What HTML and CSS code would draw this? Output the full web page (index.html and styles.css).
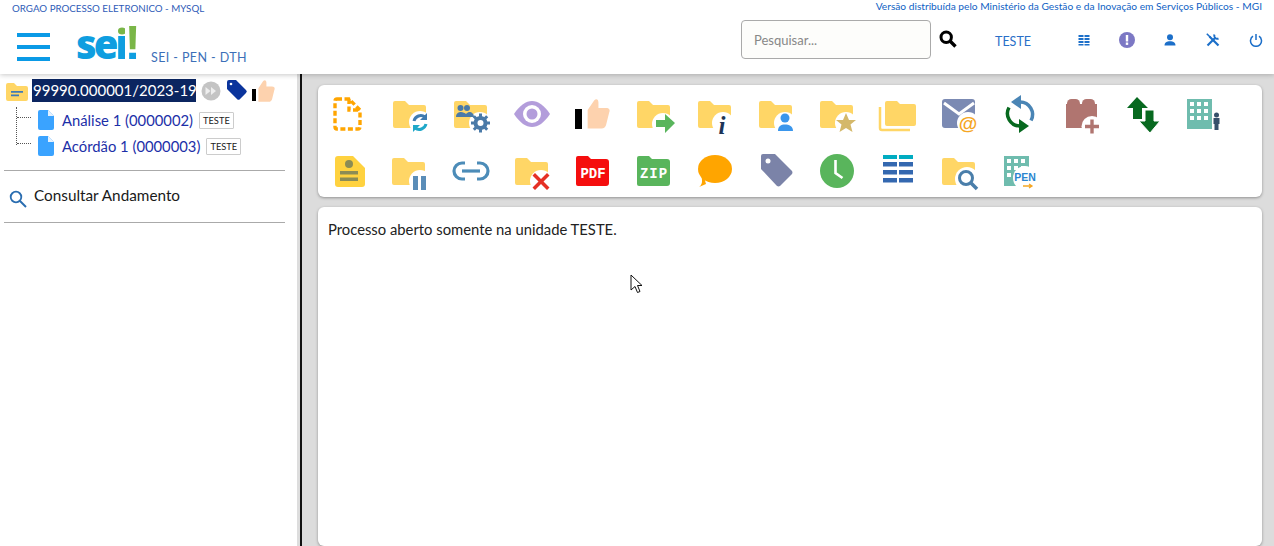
FILE: index.html
```html
<!DOCTYPE html>
<html lang="pt-BR">
<head>
<meta charset="utf-8">
<title>SEI</title>
<link rel="stylesheet" href="styles.css">
</head>
<body>
<svg class="defs" width="0" height="0">
  <defs>
    <path id="folder" d="M3 9a2 2 0 0 1 2-2h10l4 4h15a2 2 0 0 1 2 2v19a2 2 0 0 1-2 2H5a2 2 0 0 1-2-2z" fill="#ffd666"/>
    <g id="bldg">
      <rect x="0" y="0" width="25" height="30" fill="#6fbcae"/>
      <g fill="#fff">
        <rect x="3" y="3" width="4" height="4"/><rect x="10" y="3" width="4" height="4"/><rect x="17" y="3" width="4" height="4"/>
        <rect x="3" y="10" width="4" height="4"/><rect x="10" y="10" width="4" height="4"/><rect x="17" y="10" width="4" height="4"/>
        <rect x="3" y="17" width="4" height="4"/><rect x="10" y="17" width="4" height="4"/><rect x="17" y="17" width="4" height="4"/>
      </g>
    </g>
    <path id="thumb" d="M8 14l6-9c2-2 4-1 4 2v5h7c3 0 4 2 3 4l-3 12c-1 2-2 3-4 3H8z" fill="#fdd2ae"/>
  </defs>
</svg>
<div class="page">
  <header class="header">
    <div class="topline">
      <a class="org">ORGAO PROCESSO ELETRONICO - MYSQL</a>
      <a class="version">Versão distribuída pelo Ministério da Gestão e da Inovação em Serviços Públicos - MGI</a>
    </div>
    <div class="bar">
      <div class="burger"><span></span><span></span><span></span></div>
      <div class="logo">se<span class="logo-i">i</span><span class="logo-bang">!</span></div>
      <div class="system">SEI - PEN - DTH</div>
      <div class="spacer"></div>
      <div class="search">Pesquisar...</div>
      <svg class="sicon" width="18" height="18" viewBox="0 0 18 18"><circle cx="7.2" cy="7.2" r="5.2" fill="none" stroke="#000" stroke-width="3"/><path d="M11 11l5.500 5.500" stroke="#000" stroke-width="3.400"/></svg>
      <div class="unit">TESTE</div>
      <div class="tools">
        <svg width="14" height="14" viewBox="0 0 14 14" fill="#1c6fc9"><path d="M1.500 2h5v2h-5zM7.500 2h5v2h-5zM1.500 5h5v2h-5zM7.500 5h5v2h-5zM1.500 8h5v2h-5zM7.500 8h5v2h-5zM1.500 11h5v1.500h-5zM7.500 11h5v1.500h-5z"/></svg>
        <svg width="18" height="18" viewBox="0 0 18 18"><circle cx="9" cy="9" r="8" fill="#7c78c4"/><rect x="7.800" y="4" width="2.400" height="6.500" fill="#fff"/><rect x="7.800" y="11.500" width="2.400" height="2.400" fill="#fff"/></svg>
        <svg width="14" height="14" viewBox="0 0 14 14" fill="#1c6fc9"><circle cx="7" cy="4.200" r="3"/><path d="M1.500 12.500c0-3 2.500-4.300 5.500-4.300s5.500 1.300 5.500 4.300z"/></svg>
        <svg width="14" height="14" viewBox="0 0 14 14" fill="none" stroke="#1c6fc9"><path d="M3.500 3.500l9 9" stroke-width="2.200"/><path d="M9.500 4.500L1.500 12.500" stroke-width="2.200"/><path d="M0.800 0.800l3.500 3.500" stroke-width="1.600"/><path d="M8.500 1.500a3 3 0 0 0 4 4" stroke-width="2"/></svg>
        <svg width="14" height="14" viewBox="0 0 14 14" fill="none" stroke="#1c6fc9" stroke-width="1.500"><path d="M4 3.200a5.500 5.500 0 1 0 6 0M7 1v6"/></svg>
      </div>
    </div>
  </header>
  <div class="main">
    <aside class="tree">
      <div class="proc">
        <svg width="22" height="18" viewBox="0 0 22 18" class="pfolder"><path d="M0 2a2 2 0 0 1 2-2h6l3 3h9a2 2 0 0 1 2 2v11a2 2 0 0 1-2 2H2a2 2 0 0 1-2-2z" fill="#ffd666"/><path d="M5 8h12v1.800H5zM5 11.500h8v1.800H5z" fill="#3f7bb8"/></svg>
        <span class="procnum">99990.000001/2023-19</span>
        <svg class="pi1" width="20" height="20" viewBox="0 0 20 20"><circle cx="10" cy="10" r="9.500" fill="#c4c4c4"/><path d="M4.500 6l5 4-5 4zM10 6l5 4-5 4z" fill="#eee"/></svg>
        <svg class="pi2" width="22" height="22" viewBox="0 0 22 22"><path d="M1 3a2 2 0 0 1 2-2h7l10 10a2 2 0 0 1 0 3l-6 6a2 2 0 0 1-3 0L1 10z" fill="#0b349c"/><circle cx="5" cy="5" r="1.300" fill="#fff"/></svg>
        <svg class="pi3" width="24" height="22" viewBox="0 0 24 22"><rect x="0" y="9" width="4" height="12" fill="#000"/><g transform="translate(0 -3) scale(.8)"><use href="#thumb"/></g></svg>
      </div>
      <div class="docs">
        <div class="doc">
          <svg width="16" height="20" viewBox="0 0 16 20"><path d="M2 0h8l6 6v12a2 2 0 0 1-2 2H2a2 2 0 0 1-2-2V2a2 2 0 0 1 2-2z" fill="#3aa3ff"/><path d="M10 0l6 6h-6z" fill="#e4f1ff"/></svg>
          <a class="doclink">Análise 1 (0000002)</a><span class="tag">TESTE</span>
        </div>
        <div class="doc">
          <svg width="16" height="20" viewBox="0 0 16 20"><path d="M2 0h8l6 6v12a2 2 0 0 1-2 2H2a2 2 0 0 1-2-2V2a2 2 0 0 1 2-2z" fill="#3aa3ff"/><path d="M10 0l6 6h-6z" fill="#e4f1ff"/></svg>
          <a class="doclink">Acórdão 1 (0000003)</a><span class="tag">TESTE</span>
        </div>
      </div>
      <hr class="rule">
      <div class="consult">
        <svg width="18" height="18" viewBox="0 0 18 18"><circle cx="7" cy="7" r="5.300" fill="none" stroke="#2a6db0" stroke-width="1.800"/><path d="M11 11l6 6" stroke="#2a6db0" stroke-width="2"/></svg>
        <span>Consultar Andamento</span>
      </div>
      <hr class="rule rule2">
    </aside>
    <div class="split"></div>
    <section class="content">
      <div class="card toolbar">
        <svg viewBox="0 0 40 40"><path d="M8 5h12l11 11v17a2 2 0 0 1-2 2H8a2 2 0 0 1-2-2V7a2 2 0 0 1 2-2zM20 5v11h11" fill="none" stroke="#ffa500" stroke-width="3.400" stroke-dasharray="5 2.500"/></svg>
        <svg viewBox="0 0 40 40"><use href="#folder"/><circle cx="30" cy="28" r="11" fill="#fff"/><path d="M24 27a7 7 0 0 1 11-4" fill="none" stroke="#3f7bb0" stroke-width="3"/><path d="M37 19v7h-7z" fill="#3f7bb0"/><path d="M36 30a7 7 0 0 1-11 4" fill="none" stroke="#1fa8c9" stroke-width="3"/><path d="M23 38v-7h7z" fill="#1fa8c9"/></svg>
        <svg viewBox="0 0 40 40"><use href="#folder"/><circle cx="29" cy="29" r="11" fill="#fff"/><g fill="#4a7aa8"><circle cx="9.500" cy="14" r="3"/><circle cx="16" cy="14" r="3"/><path d="M5 23c0-4 3-5 5-5s4 1 5 2c1-1 2-2 3-2 3 0 5 2 5 5z"/><circle cx="29.500" cy="29" r="7"/><g stroke="#4a7aa8" stroke-width="3"><path d="M29.500 19.500v19M20 29h19M22.800 22.300l13.400 13.400M36.200 22.300l-13.400 13.400"/></g></g><circle cx="29.500" cy="29" r="3" fill="#fff"/></svg>
        <svg viewBox="0 0 40 40"><path d="M2 20C8 11 14 7 20 7s12 4 18 13c-6 9-12 13-18 13S8 29 2 20z" fill="#b39ddb"/><circle cx="20" cy="20" r="9" fill="#fff"/><circle cx="20" cy="20" r="5.500" fill="#b39ddb"/></svg>
        <svg viewBox="0 0 40 40"><rect x="2" y="15" width="7" height="20" fill="#000"/><g transform="translate(6 1)"><use href="#thumb" transform="scale(1.080)"/></g></svg>
        <svg viewBox="0 0 40 40"><use href="#folder"/><circle cx="29" cy="30" r="11" fill="#fff"/><path d="M22 26h9v-6l10 9-10 10v-6h-9z" fill="#59b55c"/></svg>
        <svg viewBox="0 0 40 40"><use href="#folder"/><circle cx="28" cy="29" r="11" fill="#fff"/><text class="iconi" x="23.500" y="40">i</text></svg>
        <svg viewBox="0 0 40 40"><use href="#folder"/><circle cx="29" cy="29" r="11" fill="#fff"/><circle cx="29" cy="24" r="4.500" fill="#3a96ec"/><path d="M22 37c0-5 3-6.500 7-6.500s8 1.500 8 6.500z" fill="#3a96ec"/></svg>
        <svg viewBox="0 0 40 40"><use href="#folder"/><circle cx="29" cy="29" r="11" fill="#fff"/><path d="M29 19l3 7h7l-5.500 4.500 2 7.500-6.500-4-6.500 4 2-7.500L19 26h7z" fill="#d4b86a"/></svg>
        <svg viewBox="0 0 40 40"><path d="M2 13v21a2 2 0 0 0 2 2h28" fill="none" stroke="#ffd666" stroke-width="2.500"/><path d="M7 9a2 2 0 0 1 2-2h10l3 3h14a2 2 0 0 1 2 2v18a2 2 0 0 1-2 2H9a2 2 0 0 1-2-2z" fill="#ffd666"/></svg>
        <svg viewBox="0 0 40 40"><rect x="3" y="5" width="33" height="29" rx="3" fill="#7b8ab3"/><path d="M5 9l15 11 15-11" fill="none" stroke="#fff" stroke-width="3"/><circle cx="29" cy="29" r="11" fill="#fff"/><text class="iconat" x="29" y="36">@</text></svg>
        <svg viewBox="0 0 40 40"><path d="M20 8a12.500 12.500 0 0 1 11 18.500" fill="none" stroke="#4a85b5" stroke-width="3.500"/><path d="M21 1v14L11 8z" fill="#4a85b5"/><path d="M20 32a12.500 12.500 0 0 1-11-18.500" fill="none" stroke="#07691f" stroke-width="3.500"/><path d="M19 25v14l10-7z" fill="#07691f"/></svg>
        <svg viewBox="0 0 40 40"><rect x="6" y="5" width="13" height="9" rx="4.500" fill="#b07570"/><rect x="21" y="5" width="13" height="9" rx="4.500" fill="#b07570"/><rect x="5" y="10" width="31" height="24" fill="#b07570"/><circle cx="31" cy="32.500" r="10.500" fill="#fff"/><path d="M29.300 25.500h3.400v5.300H38v3.400h-5.300v5.300h-3.400v-5.300H24v-3.400h5.300z" fill="#b07570"/></svg>
        <svg viewBox="0 0 40 40"><path d="M5 14L15 3l11 11h-6v11h-9V14z" fill="#07691f"/><path d="M23 16h9v11h6L28 39 17 27h6z" fill="#07691f" stroke="#fff" stroke-width="1"/></svg>
        <svg viewBox="0 0 40 40"><use href="#bldg" x="4" y="5"/><circle cx="33.500" cy="21" r="2.500" fill="#37506b"/><path d="M30.500 24h6v6h-1v6h-4v-6h-1z" fill="#37506b"/></svg>

        <svg viewBox="0 0 40 40"><path d="M9 5h15l12 12v16a3 3 0 0 1-3 3H9a3 3 0 0 1-3-3V8a3 3 0 0 1 3-3z" fill="#ffd23f"/><circle cx="20" cy="13" r="4" fill="#8c8c55"/><path d="M11 20h18v3.500H11zM11 26.500h18V30H11z" fill="#8c8c55"/></svg>
        <svg viewBox="0 0 40 40"><use href="#folder" x="-1"/><circle cx="30" cy="30" r="11" fill="#fff"/><path d="M23 25h5v14h-5zM31 25h5v14h-5z" fill="#5a8db8"/></svg>
        <svg viewBox="0 0 40 40"><path d="M14 12H11a8 8 0 0 0 0 16h3M26 12h3a8 8 0 0 1 0 16h-3" fill="none" stroke="#4c8cb8" stroke-width="3.200"/><path d="M11 20h18" stroke="#4c8cb8" stroke-width="3.200"/></svg>
        <svg viewBox="0 0 40 40"><use href="#folder"/><circle cx="29" cy="30" r="11" fill="#fff"/><path d="M23 24l6 6 6-6 2.500 2.500-6 6 6 6L35 41l-6-6-6 6-2.500-2.500 6-6-6-6z" fill="#e53024" transform="translate(0 -2)"/></svg>
        <svg viewBox="0 0 40 40"><path d="M3 7a2 2 0 0 1 2-2h10l3 3h15a3 3 0 0 1 3 3v21a3 3 0 0 1-3 3H5a2 2 0 0 1-2-2z" fill="#f50e0e"/><text class="iconpdf" x="20" y="27">PDF</text></svg>
        <svg viewBox="0 0 40 40"><path d="M3 7a2 2 0 0 1 2-2h10l3 3h15a3 3 0 0 1 3 3v21a3 3 0 0 1-3 3H5a2 2 0 0 1-2-2z" fill="#59b55c"/><text class="iconzip" x="20" y="27">ZIP</text></svg>
        <svg viewBox="0 0 40 40"><ellipse cx="20" cy="18" rx="17" ry="14" fill="#ffa500"/><path d="M9 26l2 7-7 3c3-2 4-6 2-11z" fill="#ffa500"/></svg>
        <svg viewBox="0 0 40 40"><path d="M5 5a2 2 0 0 1 2-2h12l17 17a3 3 0 0 1 0 3L24 35a3 3 0 0 1-3 0L5 18z" fill="#7b83a8"/><circle cx="12" cy="10" r="2.500" fill="#fff"/></svg>
        <svg viewBox="0 0 40 40"><circle cx="20" cy="20" r="17" fill="#59b55c"/><path d="M18.500 9v13l7 5" fill="none" stroke="#fff" stroke-width="2.600"/></svg>
        <svg viewBox="0 0 40 40"><rect x="5" y="4" width="14" height="4" fill="#00acc1"/><rect x="21" y="4" width="14" height="4" fill="#00acc1"/><path d="M5 11h14v4.500H5zM21 11h14v4.500H21zM5 19h14v4.500H5zM21 19h14v4.500H21zM5 27h14v4.500H5zM21 27h14v4.500H21z" fill="#3468b0"/></svg>
        <svg viewBox="0 0 40 40"><use href="#folder"/><circle cx="28" cy="28" r="12" fill="#fff"/><circle cx="27" cy="27" r="6.500" fill="none" stroke="#4a7eaa" stroke-width="3"/><path d="M32 32l6 6" stroke="#4a7eaa" stroke-width="3.500"/></svg>
        <svg viewBox="0 0 40 40"><use href="#bldg" x="4" y="5"/><circle cx="25" cy="27" r="12" fill="#fff"/><text class="iconpen" x="25" y="30">PEN</text><path d="M23 35h8M29 33l3 2-3 2" fill="none" stroke="#f5a623" stroke-width="1.300"/></svg>
      </div>
      <div class="card body">
        <p>Processo aberto somente na unidade TESTE.</p>
      </div>
    </section>
  </div>
  <svg class="cursor" width="14" height="21" viewBox="0 0 14 21"><path d="M1 1v15l4-3.500 2.500 6 2.500-1-2.500-6H12z" fill="#fff" stroke="#111" stroke-width="1"/></svg>
</div>
</body>
</html>
```
FILE: styles.css
```css
* { box-sizing: border-box; }
html, body { margin: 0; padding: 0; }
body { font-family: Lato, "Open Sans", sans-serif; background: #fff; color: #222; }
.defs { position: absolute; }
.page { position: relative; width: 1274px; height: 546px; overflow: hidden; display: flex; flex-direction: column; }

.header { height: 74px; flex: none; background: #fff; position: relative; z-index: 2; box-shadow: 0 1px 5px rgba(0,0,0,.22); }
.topline { display: flex; justify-content: space-between; height: 13px; padding: 0 12px; }
.org { font-size: 9.750px; color: #2f5cb8; margin-top: 3px; line-height: 11px; }
.version { font-size: 10.200px; color: #0f5fc4; line-height: 13px; }
.bar { display: flex; align-items: center; height: 61px; position: relative; }
.burger { margin-left: 17px; width: 33px; display: flex; flex-direction: column; gap: 8px; margin-top: 6px; }
.burger span { height: 4px; background: #0a9ae6; }
.logo { margin-left: 26px; font-family: "Open Sans", sans-serif; font-weight: 800; font-size: 40px; line-height: 40px; letter-spacing: -3px; color: #0f9ee0; margin-top: -1px; width: 75px; white-space: nowrap; }
.logo-i { background: linear-gradient(#7ab648 0, #7ab648 20px, #0f9ee0 20px); -webkit-background-clip: text; background-clip: text; color: transparent; }
.logo-bang { font-family: "Liberation Sans", sans-serif; font-weight: 700; font-size: 49px; line-height: 40px; letter-spacing: 0; margin-left: -1px; background: linear-gradient(#7ab648 0, #7ab648 36px, #0f9ee0 36px); -webkit-background-clip: text; background-clip: text; color: transparent; }
.system { font-size: 12.500px; color: #3c6fb8; letter-spacing: .4px; margin-top: 27px; }
.spacer { flex: 1; }
.search { width: 190px; height: 39px; border: 1px solid #aaa; border-radius: 4px; background: #fdfdfb; color: #888; font-size: 13px; padding: 11px 12px; line-height: 16px; margin-top: -9px; }
.sicon { margin-left: 8px; margin-top: -9px; }
.unit { margin-left: 38px; width: 36px; font-size: 12.500px; color: #2a6fc8; margin-top: -5px; }
.tools { display: flex; align-items: center; margin-left: 46px; margin-right: 11px; gap: 29px; margin-top: -8px; }
.tools svg { flex: none; }
.tools svg:nth-child(2) { margin: 0 -2px; }

.main { flex: 1; display: flex; min-height: 0; }
.tree { width: 297px; flex: none; background: #fff; padding-top: 5px; }
.proc { display: flex; align-items: center; height: 23px; padding-left: 6px; }
.pfolder { margin-top: 2px; }
.procnum { margin-left: 4px; background: #0b2560; color: #fff; font-size: 15px; line-height: 23px; height: 23px; width: 164px; white-space: nowrap; padding-left: 1px; }
.pi1 { margin-left: 5px; }
.pi2 { margin-left: 5px; margin-top: -1px; }
.pi3 { margin-left: 4px; }
.docs { margin-left: 16px; padding-left: 21px; margin-top: 5px; position: relative; border-left: 1px dotted #555; height: 38px; }
.doc { display: flex; align-items: center; height: 26px; position: relative; white-space: nowrap; }
.doc::before { content: ""; position: absolute; left: -21px; top: 10px; width: 14px; border-top: 1px dotted #555; }
.doc svg { flex: none; }
.doclink { margin-left: 8px; font-size: 14.800px; color: #1c2fa8; }
.tag { margin-left: 6px; border: 1px solid #ccc; font-size: 9.300px; color: #222; height: 17px; line-height: 16px; padding: 0 3px; border-radius: 1px; }
.rule { margin: 25px 12px 0 4px; border: 0; border-top: 1px solid #aaa; height: 0; }
.consult { display: flex; align-items: center; margin-top: 15px; padding-left: 9px; height: 22px; font-size: 15.300px; color: #1a1a1a; }
.consult span { margin-left: 7px; margin-top: -4px; }
.consult svg { margin-top: 4px; }
.rule2 { margin-top: 14px; }
.split { flex: none; width: 5px; background: linear-gradient(to right, #ddd 0, #ddd 3px, #111 3px, #111 4.700px, #ddd 4.700px); }
.content { flex: 1; background: #dcdcdc; padding: 11px 12px 0 16px; display: flex; flex-direction: column; gap: 10px; min-width: 0; }
.card { background: #fff; border-radius: 6px; box-shadow: 0 1px 3px rgba(0,0,0,.35); }
.toolbar { height: 112px; display: grid; grid-template-columns: repeat(15, 61px); grid-auto-rows: 57px; justify-items: center; align-items: center; }
.toolbar svg { width: 40px; height: 40px; display: block; overflow: visible; }
.body { flex: 1; padding: 13px 10px; }
.body p { margin: 0; font-size: 14.800px; line-height: 18px; color: #222; }

.iconi { font-family: "Liberation Serif", serif; font-style: italic; font-weight: 700; font-size: 25px; fill: #1d3557; }
.iconat { font-family: "Liberation Sans", sans-serif; font-weight: 700; font-size: 19px; fill: #f5a623; text-anchor: middle; }
.iconpdf { font-family: "Liberation Mono", monospace; font-weight: 700; font-size: 14px; fill: #fff; text-anchor: middle; }
.iconzip { font-family: "Liberation Mono", monospace; font-weight: 700; font-size: 14px; letter-spacing: 1px; fill: #fff; text-anchor: middle; }
.iconpen { font-family: "Liberation Sans", sans-serif; font-weight: 700; font-size: 10.500px; fill: #2a86d0; text-anchor: middle; }

.cursor { position: absolute; left: 630px; top: 274px; z-index: 3; }
```
